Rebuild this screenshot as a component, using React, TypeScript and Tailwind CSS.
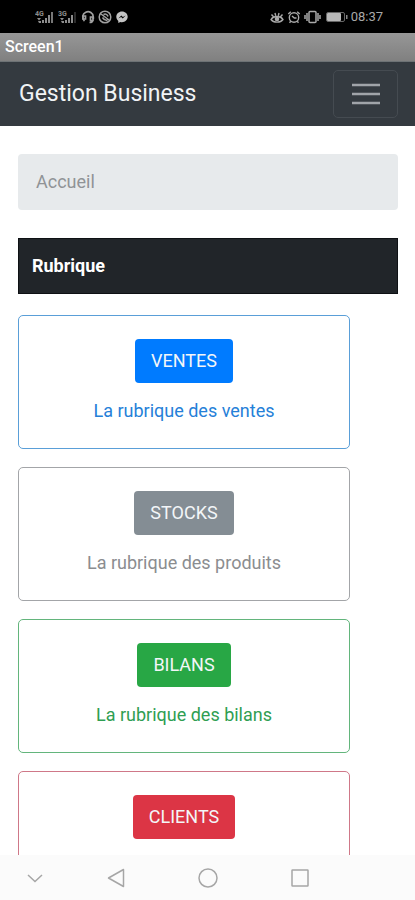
import React from "react";

type Rubrique = {
  name: string;
  text?: string;
  card: string;
  button: string;
};

const rubriques: Rubrique[] = [
  {
    name: "VENTES",
    text: "La rubrique des ventes",
    card: "border-[#5a9fd8] text-[#2580d8]",
    button: "bg-[#007bff]",
  },
  {
    name: "STOCKS",
    text: "La rubrique des produits",
    card: "border-[#a3a5a8] text-[#8b8d90]",
    button: "bg-[#848d94]",
  },
  {
    name: "BILANS",
    text: "La rubrique des bilans",
    card: "border-[#63b57c] text-[#2f9e52]",
    button: "bg-[#28a745]",
  },
  {
    name: "CLIENTS",
    card: "border-[#cf7888] text-[#dc3545]",
    button: "bg-[#dc3545]",
  },
];

function Signal({ label }: { label: string }) {
  return (
    <svg className="h-4 w-5" viewBox="0 0 20 16" fill="#8d8d8d" aria-hidden="true">
      <text x="0" y="7" fontSize="7" fontWeight="700" fontFamily="Roboto, sans-serif">
        {label}
      </text>
      <path d="M2 9h4l-2 2.500zM3 12h3v2H4z" />
      <path d="M7 11h2v3H7zM10 9h2v5h-2zM13 6h2v8h-2z" />
      <path d="M16 3h2v11h-2z" fill={label === "4G" ? "#777" : "#2c2c2c"} />
    </svg>
  );
}

function StatusBar() {
  return (
    <div className="flex h-[33px] shrink-0 items-center justify-between bg-black pr-8 pl-[35px]">
      <div className="flex items-center gap-[3px]">
        <Signal label="4G" />
        <Signal label="3G" />
        <svg className="h-3.5 w-3.5" viewBox="0 0 14 14" fill="none" stroke="#a0a0a0" strokeWidth="1.700" aria-hidden="true">
          <path d="M3.500 11A5.300 5.300 0 1 1 12.300 7v2" />
          <path d="M2 6v3h2.500V6zM9.500 7v3.500H12V7zM11.500 10.500c0 1.500-1 2-3 2" />
        </svg>
        <svg className="h-3.5 w-3.5" viewBox="0 0 14 14" fill="none" stroke="#a0a0a0" strokeWidth="1.500" aria-hidden="true">
          <circle cx="7" cy="7" r="5.800" />
          <path d="M3 4l8 6M4.500 7.500c1.500 2.500 3 3 5 2.500M5.500 4.500c2-1 4 0 4.500 2" />
        </svg>
        <svg className="h-3.5 w-3.5" viewBox="0 0 14 14" aria-hidden="true">
          <path d="M7 1.500C3.800 1.500 1.300 3.800 1.300 6.800c0 1.700.8 3.100 2 4.100v2.200l2-1.100c.5.200 1.100.2 1.700.2 3.200 0 5.700-2.400 5.700-5.400S10.200 1.500 7 1.500z" fill="#c4c4c4" />
          <path d="M3.300 8.500l3-3 1.600 1.500 2.800-1.500-3 3-1.600-1.500z" fill="#000" />
        </svg>
      </div>
      <div className="flex items-center gap-[3px] text-[#a8a8a8]">
        <svg className="h-3.5 w-3.5" viewBox="0 0 14 14" fill="none" stroke="currentColor" strokeWidth="1.400" aria-hidden="true">
          <path d="M1 9.500c2.500-4 9.500-4 12 0-2.500 3.500-9.500 3.500-12 0zM1.500 4.500l2 2.300M5 3l.7 2.700M9 3l-.7 2.700M12.500 4.500l-2 2.300" />
          <circle cx="7" cy="9" r="1.600" fill="currentColor" />
        </svg>
        <svg className="h-3.5 w-3.5" viewBox="0 0 14 14" fill="none" stroke="currentColor" strokeWidth="1.400" aria-hidden="true">
          <circle cx="7" cy="7.500" r="4.700" />
          <path d="M1.300 4l2.500-2.300M12.700 4l-2.500-2.300M5 6l2.300 2H9.500M3.800 11.300l-1.300 1.500M10.200 11.300l1.300 1.500" />
        </svg>
        <svg className="h-3.5 w-[17px]" viewBox="0 0 17 14" fill="none" stroke="currentColor" strokeWidth="1.500" aria-hidden="true">
          <rect x="5" y="1.500" width="7" height="11" rx="1" />
          <path d="M3 3v8M14 3v8M1 5v4M16 5v4" />
        </svg>
        <svg className="h-3.5 w-6" viewBox="0 0 24 14" aria-hidden="true">
          <rect x="2.500" y="2.500" width="18" height="9" rx="1.500" fill="none" stroke="#666" />
          <rect x="3" y="3" width="14" height="8" rx="1" fill="#b8b8b8" />
          <path d="M22 5h1.500v4H22z" fill="#888" />
        </svg>
        <time className="text-[13px] leading-4">08:37</time>
      </div>
    </div>
  );
}

function NavigationKeys() {
  const icon = "h-6 w-6 fill-none stroke-[#a6a6a6] stroke-[1.500]";
  return (
    <div className="grid h-[45px] shrink-0 grid-cols-[1fr_92px_92px_92px_1fr] bg-[#fbfbfb]">
      <button type="button" aria-label="Masquer" className="flex items-center justify-center">
        <svg className={icon} viewBox="0 0 24 24">
          <path d="M5 9l7 6.500L19 9" />
        </svg>
      </button>
      <button type="button" aria-label="Retour" className="flex items-center justify-center">
        <svg className={icon} viewBox="0 0 24 24">
          <path d="M19.500 3.500v17L4.500 12z" strokeLinejoin="round" />
        </svg>
      </button>
      <button type="button" aria-label="Accueil du téléphone" className="flex items-center justify-center">
        <svg className={icon} viewBox="0 0 24 24">
          <circle cx="12" cy="12" r="9" />
        </svg>
      </button>
      <button type="button" aria-label="Applications récentes" className="flex items-center justify-center">
        <svg className={icon} viewBox="0 0 24 24">
          <rect x="4" y="4" width="16" height="16" rx="0.500" />
        </svg>
      </button>
    </div>
  );
}

export default function App() {
  return (
    <div className="flex h-screen flex-col overflow-hidden bg-white font-[Roboto,sans-serif]">
      <StatusBar />
      <div className="flex h-[29px] shrink-0 items-center border-b border-[#6d7275] bg-linear-to-b from-[#979797] to-[#808080] px-[5px] text-base font-medium text-white">
        Screen1
      </div>
      <header className="flex h-16 shrink-0 items-center justify-between bg-[#343a40] pr-[17px] pl-[19px]">
        <a href="#accueil" className="text-[23px] leading-8 text-[#f1f3f5]">
          Gestion Business
        </a>
        <button
          type="button"
          aria-label="Menu"
          className="flex h-12 w-[65px] items-center justify-center rounded-[5px] border border-[#454b51]"
        >
          <svg className="h-6 w-7 stroke-[#a0a4a9] stroke-[2.500]" viewBox="0 0 28 24">
            <path d="M0 3h28M0 12h28M0 21h28" />
          </svg>
        </button>
      </header>
      <main className="min-h-0 flex-1 overflow-hidden pt-7 pr-[17px] pl-[18px]">
        <nav
          aria-label="Fil d'Ariane"
          className="flex h-14 items-center rounded-[4px] bg-[#e7eaec] px-[18px] text-lg text-[#909396]"
        >
          Accueil
        </nav>
        <h1 className="mt-7 flex h-14 items-center border border-[#0e1114] bg-[#212529] px-[13px] text-lg font-bold text-white">
          Rubrique
        </h1>
        <div className="mt-[21px] flex flex-col gap-[18px]">
          {rubriques.map((r) => (
            <section
              key={r.name}
              className={`flex h-[134px] w-full max-w-[332px] shrink-0 flex-col items-center rounded-[5px] border pt-[23px] ${r.card}`}
            >
              <button
                type="button"
                className={`h-11 rounded-[4px] px-4 text-lg text-[#f3f6f8] ${r.button}`}
              >
                {r.name}
              </button>
              {r.text && <p className="mt-[14px] text-lg">{r.text}</p>}
            </section>
          ))}
        </div>
      </main>
      <NavigationKeys />
    </div>
  );
}
